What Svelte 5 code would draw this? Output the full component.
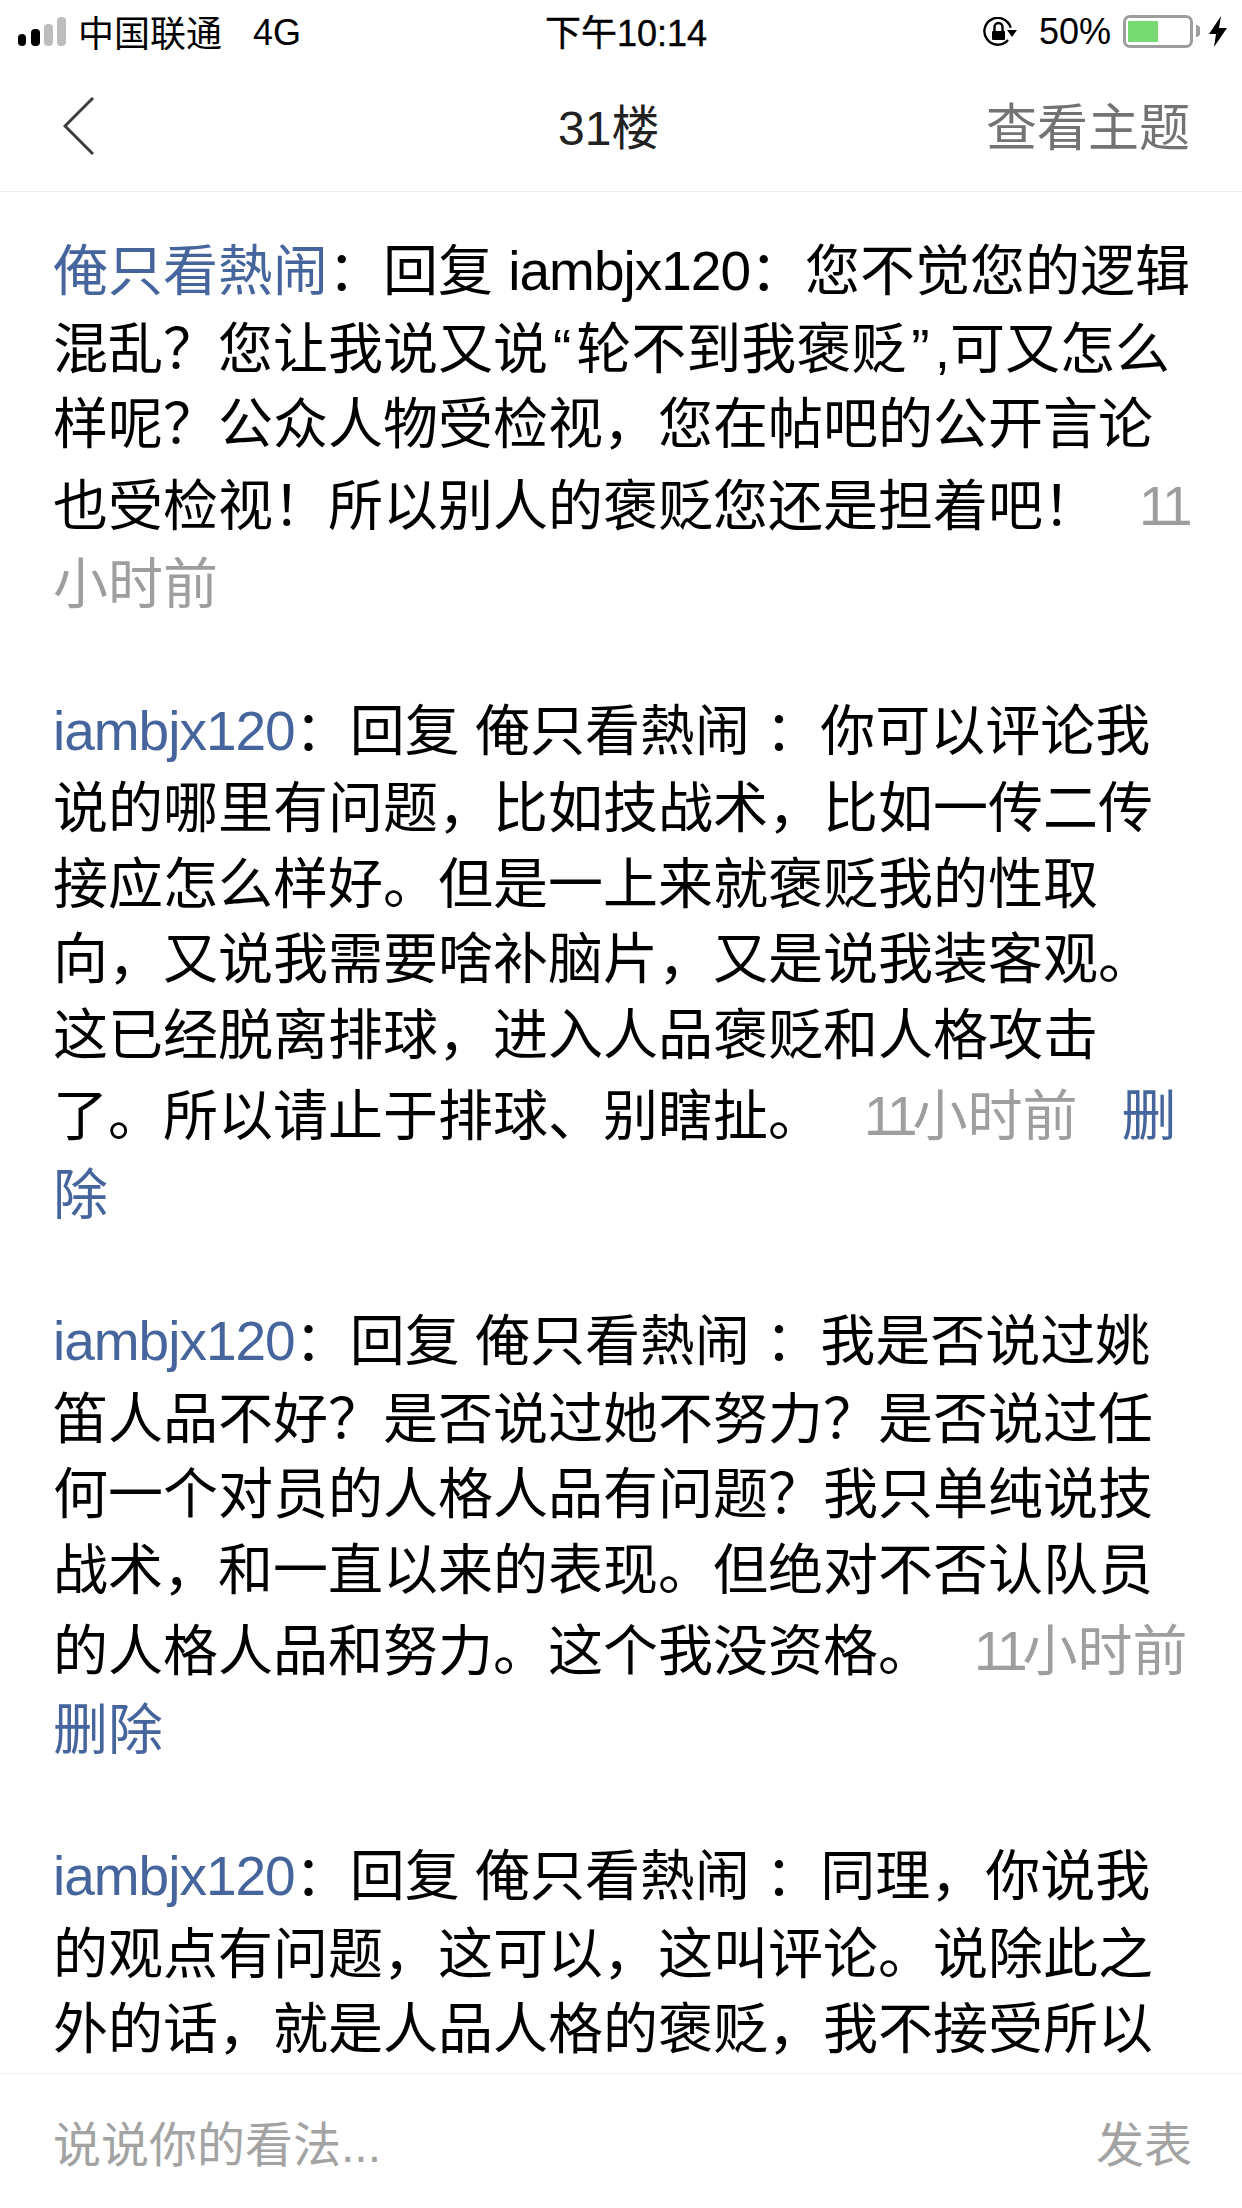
<script lang="ts">
  type Seg = { t: string; k?: string };
  type Line = { segs: Seg[]; timed?: boolean };

  const time = (): Seg[] => [{ t: '11', k: 'time gap num' }, { t: '小时前', k: 'time' }];

  const comments: Line[][] = [
    [
      { segs: [{ t: '俺只看熱闹', k: 'name' }, { t: '：回复 ' }, { t: 'iambjx120', k: 'lat' }, { t: '：您不觉您的逻辑' }] },
      { segs: [{ t: '混乱？您让我说又说' }, { t: '“', k: 'quote' }, { t: '轮不到我褒贬' }, { t: '”', k: 'quote' }, { t: ',可又怎么' }] },
      { segs: [{ t: '样呢？公众人物受检视，您在帖吧的公开言论' }] },
      { timed: true, segs: [{ t: '也受检视！所以别人的褒贬您还是担着吧！' }, { t: '11', k: 'time gap num' }] },
      { segs: [{ t: '小时前', k: 'time' }] }
    ],
    [
      { segs: [{ t: 'iambjx120', k: 'name lat' }, { t: '：回复 俺只看熱闹 ：你可以评论我' }] },
      { segs: [{ t: '说的哪里有问题，比如技战术，比如一传二传' }] },
      { segs: [{ t: '接应怎么样好。但是一上来就褒贬我的性取' }] },
      { segs: [{ t: '向，又说我需要啥补脑片，又是说我装客观。' }] },
      { segs: [{ t: '这已经脱离排球，进入人品褒贬和人格攻击' }] },
      { timed: true, segs: [{ t: '了。所以请止于排球、别瞎扯。' }, ...time(), { t: '删', k: 'name del' }] },
      { segs: [{ t: '除', k: 'name' }] }
    ],
    [
      { segs: [{ t: 'iambjx120', k: 'name lat' }, { t: '：回复 俺只看熱闹 ：我是否说过姚' }] },
      { segs: [{ t: '笛人品不好？是否说过她不努力？是否说过任' }] },
      { segs: [{ t: '何一个对员的人格人品有问题？我只单纯说技' }] },
      { segs: [{ t: '战术，和一直以来的表现。但绝对不否认队员' }] },
      { timed: true, segs: [{ t: '的人格人品和努力。这个我没资格。' }, ...time()] },
      { segs: [{ t: '删除', k: 'name' }] }
    ],
    [
      { segs: [{ t: 'iambjx120', k: 'name lat' }, { t: '：回复 俺只看熱闹 ：同理，你说我' }] },
      { segs: [{ t: '的观点有问题，这可以，这叫评论。说除此之' }] },
      { segs: [{ t: '外的话，就是人品人格的褒贬，我不接受所以' }] }
    ]
  ];
</script>

<div class="page">
  <div class="status">
    <div class="status-left">
      <svg width="48" height="29" viewBox="0 0 48 29">
        <rect x="0" y="17" width="8" height="12" rx="4" fill="#000" />
        <rect x="13" y="12" width="9" height="17" rx="4" fill="#000" />
        <rect x="26" y="7" width="9" height="22" rx="4" fill="#bdbdbd" />
        <rect x="39" y="0" width="9" height="29" rx="4" fill="#bdbdbd" />
      </svg>
      <span class="carrier">中国联通</span>
      <span class="net">4G</span>
    </div>
    <div class="clock">下午10:14</div>
    <div class="status-right">
      <svg width="34" height="29" viewBox="0 0 34 29" fill="none">
        <path d="M25 23A13.4 13.4 0 1 1 27.7 10.7" stroke="#000" stroke-width="2.4" />
        <path d="M24 13h10l-5 7z" fill="#000" />
        <rect x="9" y="14" width="13" height="9" rx="1" fill="#000" />
        <path d="M11.5 14v-4a4 4 0 0 1 8 0v4" stroke="#000" stroke-width="2.4" />
      </svg>
      <span class="pct">50%</span>
      <div class="battery"><div class="fill"></div></div>
      <div class="nub"></div>
      <svg class="bolt" width="18" height="31" viewBox="0 0 18 31">
        <path d="M12 0 0 18h7L5 31 18 12h-8z" fill="#000" />
      </svg>
    </div>
  </div>

  <header class="nav">
    <svg class="back" width="31" height="58" viewBox="0 0 31 58" fill="none">
      <path d="M30 1 2 29l28 28" stroke="#3c3c3c" stroke-width="3" />
    </svg>
    <div class="title">31楼</div>
    <div class="topic">查看主题</div>
  </header>

  <main class="list">
    {#each comments as lines}
      <section class="comment">
        {#each lines as line}
          <div class="line" class:timed={line.timed}>
            {#each line.segs as seg}
              <span class={seg.k ?? ''}>{seg.t}</span>
            {/each}
          </div>
        {/each}
      </section>
    {/each}
  </main>

  <footer class="composer">
    <span>说说你的看法...</span>
    <span>发表</span>
  </footer>
</div>

<style>
  :global(body) {
    margin: 0;
    background: #fff;
  }

  .page {
    width: 1242px;
    height: 2208px;
    display: flex;
    flex-direction: column;
    overflow: hidden;
    background: #fff;
    color: #000;
    font-family: "Liberation Sans", "Noto Sans CJK SC", sans-serif;
  }

  .status {
    height: 62px;
    flex: none;
    display: grid;
    grid-template-columns: 527px auto 1fr;
    align-items: center;
    padding: 0 15px 0 18px;
    font-size: 36px;
  }

  .status-left,
  .status-right {
    display: flex;
    align-items: center;
  }

  .status-right {
    justify-content: flex-end;
  }

  .carrier {
    margin-left: 12px;
    margin-bottom: 1px;
  }

  .net {
    margin-left: 31px;
    margin-top: 3px;
  }

  .clock {
    margin-bottom: 3px;
    -webkit-text-stroke: 0.4px #000;
  }

  .pct {
    margin-left: 22px;
    margin-top: 2px;
  }

  .battery {
    margin-left: 12px;
    width: 70px;
    height: 33px;
    border: 3px solid #9d9d9d;
    border-radius: 7px;
    padding: 3px 2px;
    box-sizing: border-box;
  }

  .fill {
    width: 30px;
    height: 100%;
    background: #76d972;
  }

  .nub {
    width: 4px;
    height: 12px;
    margin-left: 3px;
    background: #9d9d9d;
    border-radius: 0 4px 4px 0;
  }

  .bolt {
    margin-left: 9px;
  }

  .nav {
    height: 130px;
    flex: none;
    box-sizing: border-box;
    display: flex;
    align-items: center;
    padding: 0 52px 2px 63px;
    border-bottom: 1px solid #eeeeee;
  }

  .title {
    margin-left: 464px;
    margin-bottom: 3px;
    font-size: 48px;
    color: #222;
  }

  .topic {
    margin-left: auto;
    margin-bottom: 3px;
    font-size: 51px;
    color: #737373;
  }

  .list {
    flex: 1;
    min-height: 0;
    overflow: hidden;
    padding: 42px 0 0 53px;
  }

  .comment {
    margin-bottom: 71px;
  }

  .line {
    font-size: 55px;
    line-height: 75.5px;
    height: 75.5px;
    white-space: pre;
  }

  .line:first-child {
    margin-bottom: 2px;
  }

  .line.timed {
    margin-top: 6px;
    margin-bottom: 3px;
  }

  .lat {
    letter-spacing: -1px;
  }

  .quote {
    padding: 0 5px;
  }

  .name {
    color: #46659c;
  }

  .time {
    color: #9e9e9e;
  }

  .gap {
    margin-left: 41px;
  }

  .del {
    margin-left: 44px;
  }

  .num {
    letter-spacing: -3.6px;
    margin-right: -1.4px;
  }

  .composer {
    height: 135px;
    flex: none;
    box-sizing: border-box;
    border-top: 1px solid #eeeeee;
    display: flex;
    align-items: center;
    justify-content: space-between;
    padding: 0 50px 0 53px;
    font-size: 48px;
    color: #a3a3a3;
  }
</style>
